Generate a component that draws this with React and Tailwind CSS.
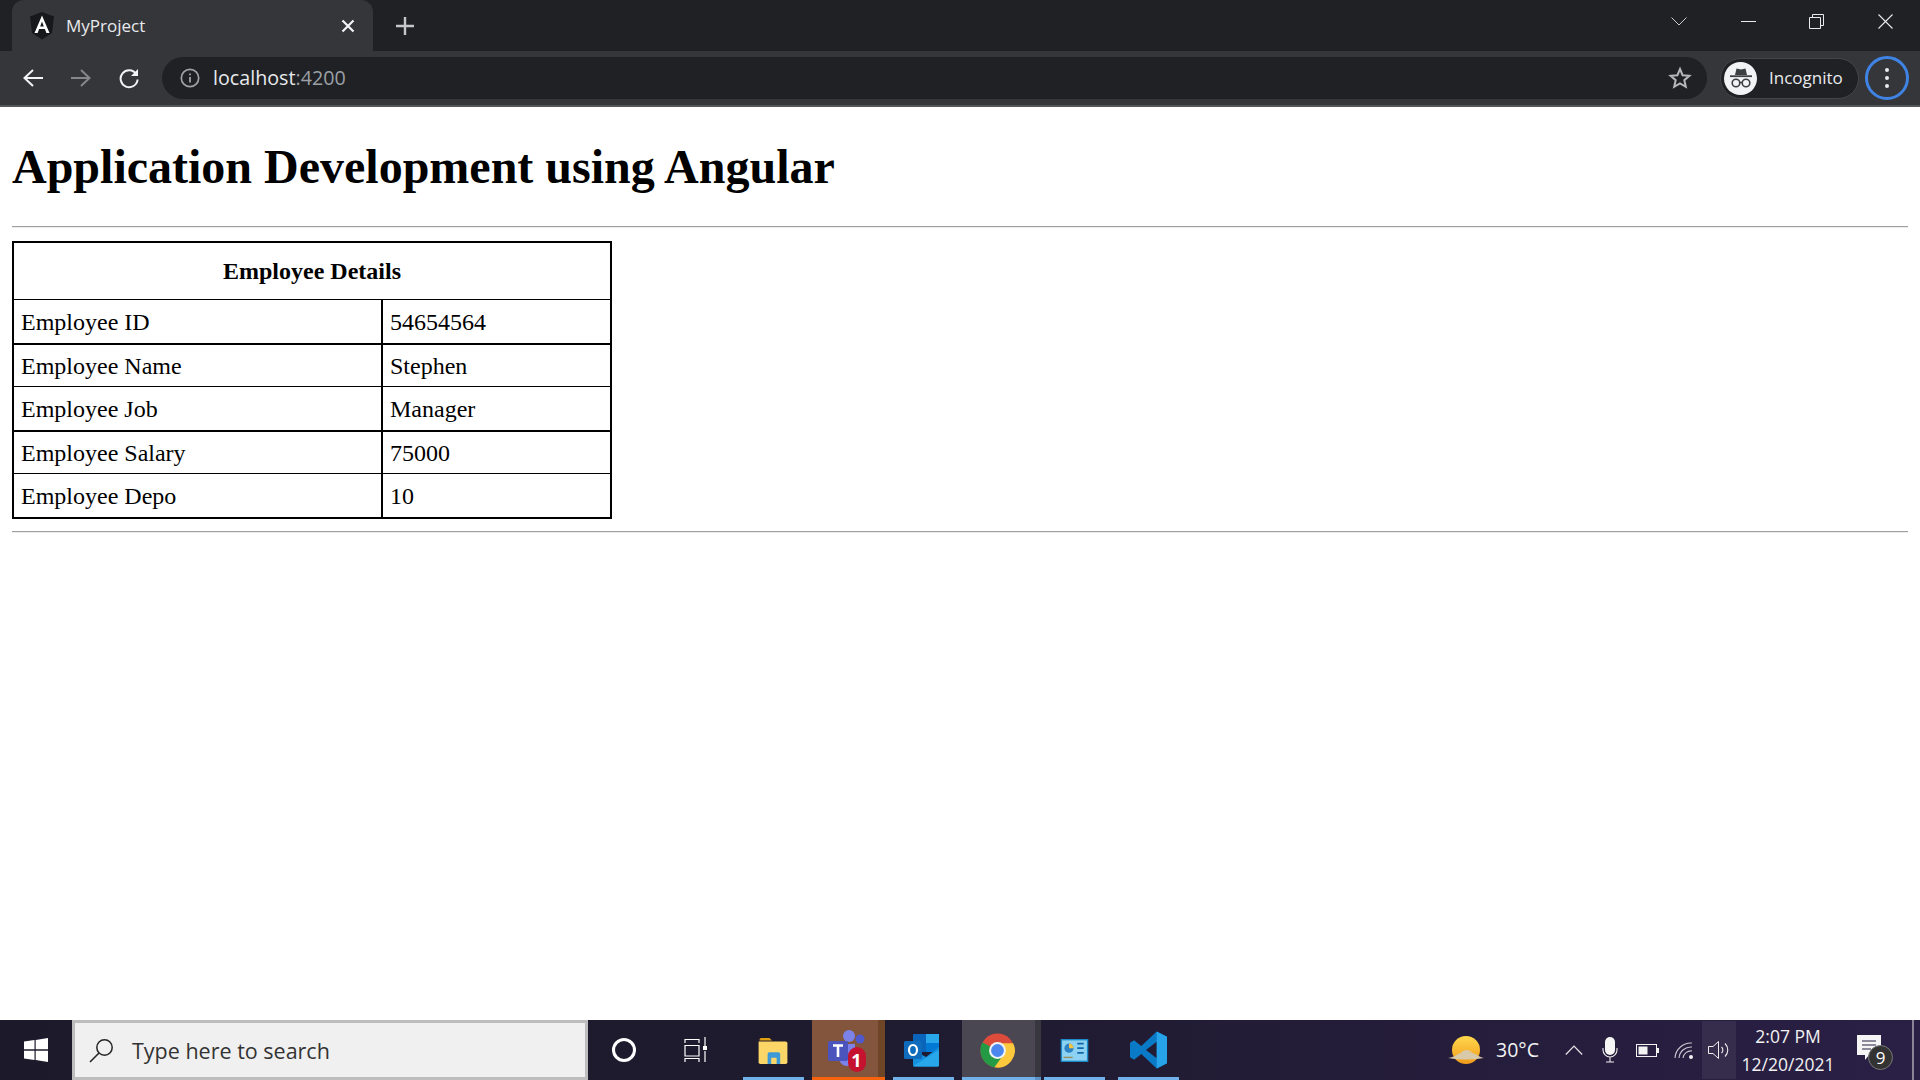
import React from "react";

const ui = { fontFamily: '"Open Sans", "Noto Sans", sans-serif' };
const serif = { fontFamily: '"Liberation Serif", "Times New Roman", serif' };

function AngularIcon() {
  return (
    <svg width="24" height="28" viewBox="0 0 24 28" aria-hidden="true">
      <path d="M12 0 L24 4.5 L22 21 L12 27.5 L2 21 L0 4.5 Z" fill="#17181b" />
      <path d="M12 3.5 L19.5 21 H16.4 L14.9 17 H9.1 L7.6 21 H4.5 Z M12 9.5 L10.2 14.4 H13.8 Z" fill="#fff" fillRule="evenodd" />
    </svg>
  );
}

function Icon({ w = 24, h = 24, vb, children, className = "" }) {
  return (
    <svg width={w} height={h} viewBox={vb || `0 0 ${w} ${h}`} fill="none" className={className} aria-hidden="true">
      {children}
    </svg>
  );
}

function TabStrip() {
  return (
    <div className="flex h-[51px] shrink-0 items-start bg-[#202124] pl-3">
      <div className="flex h-[51px] w-[361px] items-center rounded-t-[12px] bg-[#35363a] pl-[18px] pr-[18px]">
        <AngularIcon />
        <span className="ml-[12px] flex-1 text-[17px] text-[#e8eaed]">MyProject</span>
        <Icon w={14} h={14}>
          <path d="M1.5 1.5 L12.5 12.5 M12.5 1.5 L1.5 12.5" stroke="#f1f3f4" strokeWidth="2.2" />
        </Icon>
      </div>
      <div className="flex h-[51px] w-[64px] items-center justify-center">
        <Icon w={20} h={20}>
          <path d="M10 1 V19 M1 10 H19" stroke="#c4c7cb" strokeWidth="2.4" />
        </Icon>
      </div>
      <div className="flex-1" />
      <div className="flex h-[42px] w-[70px] items-center justify-center">
        <Icon w={16} h={9}>
          <path d="M0.5 0.5 L8 8 L15.5 0.5" stroke="#c9cbce" strokeWidth="1" />
        </Icon>
      </div>
      <div className="flex h-[42px] w-[68px] items-center justify-center">
        <div className="h-px w-[15px] bg-[#e8eaed]" />
      </div>
      <div className="flex h-[42px] w-[68px] items-center justify-center">
        <Icon w={15} h={15}>
          <path d="M0.5 3.5 H11.5 V14.5 H0.5 Z M3.5 3.5 V0.5 H14.5 V11.5 H11.5" stroke="#e8eaed" strokeWidth="1" />
        </Icon>
      </div>
      <div className="flex h-[42px] w-[70px] items-center justify-center">
        <Icon w={15} h={15}>
          <path d="M0.5 0.5 L14.5 14.5 M14.5 0.5 L0.5 14.5" stroke="#e8eaed" strokeWidth="1.1" />
        </Icon>
      </div>
    </div>
  );
}

function Toolbar() {
  return (
    <div className="flex h-[56px] shrink-0 items-center border-b-2 border-[#55565a] bg-[#35363a]">
      <div className="flex w-[162px] items-center pl-[22px]">
        <Icon w={22} h={20}>
          <path d="M11 2 L2.5 10 L11 18 M2.5 10 H21" stroke="#f1f3f4" strokeWidth="2" />
        </Icon>
        <Icon w={22} h={20} className="ml-[26px]">
          <path d="M11 2 L19.5 10 L11 18 M19.5 10 H1" stroke="#85878a" strokeWidth="2" />
        </Icon>
        <Icon w={22} h={22} className="ml-[26px]">
          <path d="M18.2 7 A8.5 8.5 0 1 0 19.6 12.5" stroke="#f1f3f4" strokeWidth="2" />
          <path d="M20 2 V9 H13 Z" fill="#f1f3f4" />
        </Icon>
      </div>
      <div className="flex h-[42px] w-[1545px] items-center rounded-full bg-[#202124] pl-[18px] pr-[15px]">
        <Icon w={20} h={20}>
          <circle cx="10" cy="10" r="8.7" stroke="#a0a3a6" strokeWidth="1.7" />
          <path d="M10 9 V14.5 M10 5.5 V7.3" stroke="#a0a3a6" strokeWidth="1.8" />
        </Icon>
        <span className="ml-[13px] flex-1 text-[19.7px] text-[#e8eaed]">
          localhost<span className="text-[#9aa0a6]">:4200</span>
        </span>
        <Icon w={24} h={24}>
          <path d="M12 3 L14.6 9.2 L21.4 9.8 L16.3 14.2 L17.8 20.8 L12 17.3 L6.2 20.8 L7.7 14.2 L2.6 9.8 L9.4 9.2 Z" stroke="#b5b7ba" strokeWidth="2" />
        </Icon>
      </div>
      <div className="ml-[13px] flex h-[41px] w-[139px] items-center rounded-full border border-[#45464a] bg-[#202124] pl-[3px]">
        <div className="flex h-[33px] w-[33px] items-center justify-center rounded-full bg-[#f1f3f4]">
          <Icon w={26} h={24}>
            <path d="M7 9 L8.5 2.5 L13 3.6 L17.5 2.5 L19 9 Z" fill="#3c4043" />
            <path d="M2 10.2 H24" stroke="#3c4043" strokeWidth="1.8" />
            <circle cx="8" cy="17" r="3.8" stroke="#3c4043" strokeWidth="1.6" />
            <circle cx="18" cy="17" r="3.8" stroke="#3c4043" strokeWidth="1.6" />
            <path d="M11.8 16.5 H14.2" stroke="#3c4043" strokeWidth="1.4" />
          </Icon>
        </div>
        <span className="ml-[12px] text-[17px] text-[#e8eaed]">Incognito</span>
      </div>
      <div className="ml-[6px] flex h-[44px] w-[44px] items-center justify-center rounded-full border-[3px] border-[#3f84e5]">
        <div className="flex flex-col gap-[4px]">
          <div className="h-[4px] w-[4px] rounded-full bg-[#e8eaed]" />
          <div className="h-[4px] w-[4px] rounded-full bg-[#e8eaed]" />
          <div className="h-[4px] w-[4px] rounded-full bg-[#e8eaed]" />
        </div>
      </div>
    </div>
  );
}

const rows = [
  ["Employee ID", "54654564", "h-[45px] border-b-2"],
  ["Employee Name", "Stephen", "h-[42px] border-b"],
  ["Employee Job", "Manager", "h-[45px] border-b-2"],
  ["Employee Salary", "75000", "h-[42px] border-b"],
  ["Employee Depo", "10", "h-[45px] border-b-2"],
];

function Hr() {
  return <hr className="h-[2px] border-0 border-t border-b border-t-[#a0a0a0] border-b-[#ececec]" />;
}

function Page() {
  return (
    <main className="flex-1 bg-white px-3 text-black" style={serif}>
      <h1 className="mb-[32px] mt-[32px] text-[48px] font-bold leading-[55px]">Application Development using Angular</h1>
      <Hr />
      <table className="mb-[12px] mt-[13px] w-[600px] table-fixed border-separate border-spacing-0 text-[24px] leading-[28px]">
        <colgroup>
          <col className="w-[369px]" />
          <col className="w-[231px]" />
        </colgroup>
        <tbody>
          <tr>
            <th colSpan={2} className="h-[59px] border-2 border-b border-black text-center text-[24px] font-bold">
              Employee Details
            </th>
          </tr>
          {rows.map(([k, v, cls]) => (
            <tr key={k}>
              <td className={`border-black border-l-2 pl-[7px] ${cls}`}>{k}</td>
              <td className={`border-black border-l-2 border-r-2 pl-[7px] ${cls}`}>{v}</td>
            </tr>
          ))}
        </tbody>
      </table>
      <Hr />
    </main>
  );
}

function WindowsLogo() {
  return (
    <Icon w={24} h={24}>
      <path d="M0 3.6 L10.5 2 V11.3 H0 Z M11.7 1.9 L24 0 V11.3 H11.7 Z M0 12.7 H10.5 V22 L0 20.4 Z M11.7 12.7 H24 V24 L11.7 22.1 Z" fill="#fff" />
    </Icon>
  );
}

function Explorer() {
  return (
    <Icon w={32} h={27} vb="0 0 32 30">
      <path d="M1 3 A2 2 0 0 1 3 1 H12 L15 4 H1 Z" fill="#e0a010" />
      <path d="M0 5 H30 A2 2 0 0 1 32 7 V28 A2 2 0 0 1 30 30 H2 A2 2 0 0 1 0 28 Z" fill="#fcd768" />
      <path d="M10 30 V19 A2 2 0 0 1 12 17 H22 A2 2 0 0 1 24 19 V30 H20 V23 H14 V30 Z" fill="#3c9ad8" />
    </Icon>
  );
}

function Teams() {
  return (
    <div className="relative h-[44px] w-[44px]">
      <Icon w={44} h={44}>
        <circle cx="22" cy="8" r="6" fill="#7b83eb" />
        <circle cx="33" cy="11" r="4.5" fill="#5059c9" />
        <path d="M12 16 H28 V30 A8 8 0 0 1 12 30 Z" fill="#7b83eb" />
        <rect x="1" y="13" width="20" height="20" rx="2" fill="#4b53bc" />
        <path d="M6 17.5 H16 M11 17.5 V29" stroke="#fff" strokeWidth="2.6" />
      </Icon>
      <div className="absolute left-[21px] top-[19px] flex h-[25px] w-[18px] items-center justify-center rounded-full bg-[#c4122f] text-[18px] font-bold leading-none text-white">
        1
      </div>
    </div>
  );
}

function Outlook() {
  return (
    <Icon w={36} h={34}>
      <rect x="9" y="1" width="26" height="18" rx="1" fill="#0a64ba" />
      <rect x="22" y="1" width="13" height="9" fill="#28a8ea" />
      <rect x="22" y="10" width="13" height="9" fill="#0078d4" />
      <path d="M9 17 L22 24 L35 14 V32 A1.5 1.5 0 0 1 33.5 33.5 H10.5 A1.5 1.5 0 0 1 9 32 Z" fill="#1490df" />
      <path d="M9 33 L35 17 V32 A1.5 1.5 0 0 1 33.5 33.5 H10.5 Z" fill="#28a8ea" />
      <rect x="0" y="8" width="18" height="18" rx="1.5" fill="#0f6cbd" />
      <ellipse cx="9" cy="17" rx="4" ry="5" stroke="#fff" strokeWidth="2.2" />
    </Icon>
  );
}

function Chrome() {
  return (
    <Icon w={35} h={35} vb="0 0 34 34">
      <circle cx="17" cy="17" r="16.5" fill="#dd4b3a" />
      <path d="M17 17 L2.4 9 A16.5 16.5 0 0 0 15 33.4 L23 24 Z" fill="#249a45" />
      <path d="M17 10 H32.2 A16.5 16.5 0 0 1 14 33.3 L22 22 Z" fill="#fbc93b" />
      <circle cx="17" cy="17" r="8.2" fill="#f1f3f4" />
      <circle cx="17" cy="17" r="6.2" fill="#4b87ee" />
    </Icon>
  );
}

function ControlPanel() {
  return (
    <Icon w={31} h={23} vb="0 0 30 25">
      <rect width="30" height="25" fill="#1b8ac8" />
      <rect x="1.5" y="1.5" width="27" height="22" fill="#8dd2f2" />
      <circle cx="9" cy="10" r="5" fill="#2d83c3" />
      <path d="M9 10 V5 A5 5 0 0 1 14 10 Z" fill="#f5c443" />
      <path d="M18 5 H25 M18 10 H25 M18 15 H25" stroke="#1266a8" strokeWidth="2" />
      <path d="M3 20 H13" stroke="#9a8f5a" strokeWidth="1.5" />
    </Icon>
  );
}

function VSCode() {
  return (
    <Icon w={37} h={38} vb="0 0 36 36">
      <path d="M26 0 L36 5 V31 L26 36 L11 22 L4 27.5 L0 25 V11 L4 8.5 L11 14 Z M26 10 L15.5 18 L26 26 Z" fill="#0a7ac7" fillRule="evenodd" />
      <path d="M26 0 L36 5 V31 L26 36 Z" fill="#27a3ea" />
    </Icon>
  );
}

function TaskCell({ className, line, children }) {
  return (
    <div className={`relative flex h-full items-center justify-center ${className}`}>
      {children}
      {line}
    </div>
  );
}

function Underline({ className }) {
  return <div className={`absolute bottom-0 h-[3px] ${className}`} />;
}

function Taskbar() {
  return (
    <div className="flex h-[60px] shrink-0 bg-[linear-gradient(90deg,#1c1a2a_0%,#1f1b30_50%,#2a1f45_100%)]">
      <div className="flex w-[72px] items-center justify-center pb-[1px]">
        <WindowsLogo />
      </div>
      <div className="flex w-[516px] items-center border-[3px] border-[#bdbdbd] bg-[#f0f0f0] pl-[14px]">
        <Icon w={25} h={25}>
          <circle cx="15.5" cy="9.5" r="7.7" stroke="#262626" strokeWidth="1.5" />
          <path d="M10 15 L1 24" stroke="#262626" strokeWidth="1.6" />
        </Icon>
        <span className="ml-[18px] pt-[2px] text-[21.5px] text-[#333]">Type here to search</span>
      </div>
      <TaskCell className="w-[72px]">
        <div className="h-[24px] w-[24px] rounded-full border-[3px] border-white" />
      </TaskCell>
      <TaskCell className="w-[72px]">
        <Icon w={24} h={26}>
          <path d="M1 6 V2.5 H15 V6 M1 8.5 H15 V19 H1 Z M1 25 V21.5 H15 V25 M21 0 V9 M21 14 V25" stroke="#fff" strokeWidth="1.2" />
          <rect x="19" y="9" width="4" height="4" fill="#fff" />
        </Icon>
      </TaskCell>
      <TaskCell className="w-[80px] pl-[2px]" line={<Underline className="left-[11px] w-[61px] bg-[#6fb1e8]" />}>
        <Explorer />
      </TaskCell>
      <TaskCell className="w-[73px] bg-[#82553c]" line={<Underline className="left-0 w-full bg-[#f7630c]" />}>
        <Teams />
        <div className="absolute right-0 top-0 h-full w-[7px] bg-[#6f4527]" />
      </TaskCell>
      <TaskCell className="w-[77px] pr-[3px]" line={<Underline className="left-[8px] w-[61px] bg-[#6fb1e8]" />}>
        <Outlook />
      </TaskCell>
      <TaskCell className="w-[73px] bg-[#4a4753] pr-[2px]" line={<Underline className="left-0 w-full bg-[#6fb1e8]" />}>
        <Chrome />
      </TaskCell>
      <div className="relative h-full w-[6px] bg-[#38363f]">
        <Underline className="left-0 w-full bg-[#5c93c4]" />
      </div>
      <TaskCell className="w-[66px]" line={<Underline className="left-[3px] w-[61px] bg-[#6fb1e8]" />}>
        <ControlPanel />
      </TaskCell>
      <TaskCell className="w-[82px]" line={<Underline className="left-[11px] w-[61px] bg-[#6fb1e8]" />}>
        <VSCode />
      </TaskCell>
      <div className="flex-1" />
      <div className="flex h-full items-center text-white">
        <Icon w={36} h={30}>
          <defs>
            <linearGradient id="sun" x1="0" y1="0" x2="0" y2="1">
              <stop offset="0" stopColor="#ffd84d" />
              <stop offset="1" stopColor="#f09a1a" />
            </linearGradient>
          </defs>
          <circle cx="18" cy="15" r="14" fill="url(#sun)" />
          <path d="M0 23 C8 22 10 18 13 18 C15 14 22 14 24 18 C28 18 30 22 36 23 C24 25 12 25 0 23 Z" fill="#d8c9a8" />
        </Icon>
        <span className="ml-[12px] w-[51px] text-[19.5px] text-[#f2f2f2]">30°C</span>
        <Icon w={18} h={10} className="ml-[18px]">
          <path d="M0.8 9.5 L9 1 L17.2 9.5" stroke="#e6e6e6" strokeWidth="1.2" />
        </Icon>
        <Icon w={16} h={26} className="ml-[19px]">
          <rect x="3" y="0" width="10" height="18" rx="5" fill="#f5f5f5" />
          <path d="M1 11 V13 A7 7 0 0 0 15 13 V11 M8 20 V25 M4 25 H12" stroke="#eee" strokeWidth="1.1" />
        </Icon>
        <Icon w={23} h={13} className="ml-[18px]">
          <rect x="0.5" y="0.5" width="20" height="12" stroke="#f2f2f2" />
          <rect x="2.5" y="2.5" width="9" height="8" fill="#f2f2f2" />
          <rect x="21" y="4" width="2" height="5" fill="#f2f2f2" />
        </Icon>
        <Icon w={20} h={18} className="ml-[15px]">
          <path d="M1 17 A16 16 0 0 1 18 2 M5 17 A12 12 0 0 1 18 6 M9 17 A8 8 0 0 1 18 10" stroke="#c9c7d0" strokeWidth="1.1" />
          <circle cx="17" cy="16" r="2" fill="#f2f2f2" />
        </Icon>
        <div className="ml-[8px] flex h-[58px] w-[34px] items-center justify-center bg-[#362c4c]">
          <Icon w={23} h={20}>
            <path d="M0.5 6.5 H5 L10.5 1.5 V18.5 L5 13.5 H0.5 Z" stroke="#eee" strokeWidth="1" />
            <path d="M13.5 7 A4 4 0 0 1 13.5 13 M17 3.5 A9 9 0 0 1 17 16.5" stroke="#eee" strokeWidth="1.1" />
          </Icon>
        </div>
        <div className="flex w-[104px] flex-col items-center text-[17.5px] leading-[28px] text-[#f2f2f2]">
          <span>2:07 PM</span>
          <span>12/20/2021</span>
        </div>
        <div className="relative ml-[17px] h-[36px] w-[36px]">
          <Icon w={26} h={30} className="mt-[3px]">
            <path d="M0 0 H24 V20 H12 L8 25 V20 H0 Z" fill="#f5f5f5" />
            <path d="M5 6 H19 M5 10 H19 M5 14 H14" stroke="#2a1f45" strokeWidth="1.2" />
          </Icon>
          <div className="absolute left-[11px] top-[13px] flex h-[25px] w-[25px] items-center justify-center rounded-full border border-[#777] bg-[#333] text-[17px] leading-none text-white">
            9
          </div>
        </div>
        <div className="ml-[19px] h-full w-[2px] bg-[#8a8596]" />
        <div className="w-[6px]" />
      </div>
    </div>
  );
}

export default function App() {
  return (
    <div className="flex h-[1080px] w-[1920px] flex-col overflow-hidden bg-white" style={ui}>
      <TabStrip />
      <Toolbar />
      <Page />
      <Taskbar />
    </div>
  );
}
